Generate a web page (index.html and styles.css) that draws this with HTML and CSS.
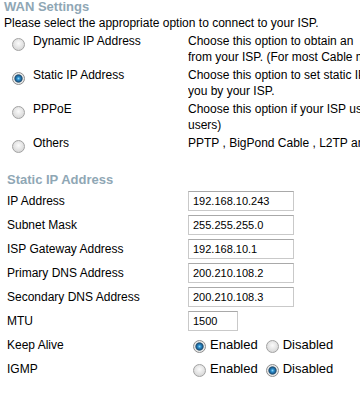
FILE: index.html
```html
<!DOCTYPE html>
<html lang="en-US">
<head>
     <meta charset="UTF-8">
     <meta name="viewport" content="width=device-width, initial-scale=1.0">
     <title>WAN Settings</title>
     <link rel="stylesheet" href="styles.css">
</head>
<body>
     <h2 class="title">WAN Settings</h2>
     <p class="intro">Please select the appropriate option to connect to your ISP.</p>
     <div class="wanTypes">
          <label class="wanOption"><input type="radio" class="radio" name="wanType"> Dynamic IP Address</label>
          <div class="wanDesc">Choose this option to obtain an<br>from your ISP. (For most Cable modem users)</div>
          <label class="wanOption"><input type="radio" class="radio" name="wanType" checked> Static IP Address</label>
          <div class="wanDesc">Choose this option to set static IP information provided to<br>you by your ISP.</div>
          <label class="wanOption"><input type="radio" class="radio" name="wanType"> PPPoE</label>
          <div class="wanDesc">Choose this option if your ISP uses PPPoE. (For most DSL<br>users)</div>
          <label class="wanOption"><input type="radio" class="radio" name="wanType"> Others</label>
          <div class="wanDesc">PPTP , BigPond Cable , L2TP and 3G</div>
     </div>

     <h2 class="title sub">Static IP Address</h2>
     <div class="form">
          <label class="lbl" for="ipAddr">IP Address</label>
          <div><input type="text" class="field" id="ipAddr" value="192.168.10.243"></div>
          <label class="lbl" for="subnet">Subnet Mask</label>
          <div><input type="text" class="field" id="subnet" value="255.255.255.0"></div>
          <label class="lbl" for="gateway">ISP Gateway Address</label>
          <div><input type="text" class="field" id="gateway" value="192.168.10.1"></div>
          <label class="lbl" for="dns1">Primary DNS Address</label>
          <div><input type="text" class="field" id="dns1" value="200.210.108.2"></div>
          <label class="lbl" for="dns2">Secondary DNS Address</label>
          <div><input type="text" class="field" id="dns2" value="200.210.108.3"></div>
          <label class="lbl" for="mtu">MTU</label>
          <div><input type="text" class="field short" id="mtu" value="1500"></div>
          <span class="lbl">Keep Alive</span>
          <div class="choice">
               <label class="opt"><input type="radio" class="radio" name="keepAlive" checked> Enabled</label>
               <label class="opt"><input type="radio" class="radio" name="keepAlive"> Disabled</label>
          </div>
          <span class="lbl">IGMP</span>
          <div class="choice">
               <label class="opt"><input type="radio" class="radio" name="igmp"> Enabled</label>
               <label class="opt"><input type="radio" class="radio" name="igmp" checked> Disabled</label>
          </div>
     </div>
</body>
</html>
```

FILE: styles.css
```css
html {
     height: 416px;
     overflow: hidden;
}

body {
     margin: 0;
     padding: 0 0 0 4px;
     font-family: "Liberation Sans", Arial, sans-serif;
     font-size: 12px;
     line-height: 16px;
     color: #000;
     background: #fff;
}

.title {
     margin: 0 0 1px 0;
     font-size: 13px;
     line-height: 14px;
     font-weight: bold;
     color: #8fa7b5;
}

.sub {
     margin: 20px 0 2px 3px;
}

.intro {
     margin: 0;
     white-space: nowrap;
}

.wanTypes {
     display: grid;
     grid-template-columns: 184px auto;
     row-gap: 2px;
     margin-top: 2px;
}

.wanOption {
     display: flex;
     align-items: flex-start;
     padding-left: 8px;
}

.wanOption .radio {
     margin: 5px 8px 0 0;
}

.wanDesc {
     white-space: nowrap;
     overflow: hidden;
}

.form {
     display: grid;
     grid-template-columns: 184px auto;
     grid-auto-rows: 24px;
     align-items: center;
     padding-left: 3px;
}

.lbl {
     white-space: nowrap;
}

.form > div {
     display: flex;
     align-items: center;
     height: 24px;
     margin-left: -3px;
}

.field {
     box-sizing: border-box;
     width: 106px;
     height: 20px;
     margin: 0;
     padding: 0 4px;
     border: 1px solid #c9c9c9;
     border-top-color: #a9a9a9;
     font-family: "Liberation Sans", Arial, sans-serif;
     font-size: 11px;
     color: #000;
     background: #fff;
}

.short {
     width: 50px;
}

.choice {
     font-size: 13px;
     padding-left: 5px;
}

.opt {
     display: flex;
     align-items: center;
     margin-right: 8px;
}

.opt .radio {
     margin: 2px 4px 0 0;
}

.radio {
     -webkit-appearance: none;
     appearance: none;
     box-sizing: border-box;
     flex: none;
     width: 13px;
     height: 13px;
     margin: 0;
     border: 1px solid #a2a2a2;
     border-radius: 50%;
     background: radial-gradient(circle at 50% 40%, #fbfbfb 0, #e4e4e4 50%, #cdcdcd 100%);
}

.radio:checked {
     border-color: #8e8e8e;
     background: radial-gradient(circle at 50% 50%, #8fd8f8 0, #2c8fcf 1.5px, #1a4e78 3.5px, #6f8796 4px, #f2f2f2 4.6px, #dcdcdc 6px);
}
```
